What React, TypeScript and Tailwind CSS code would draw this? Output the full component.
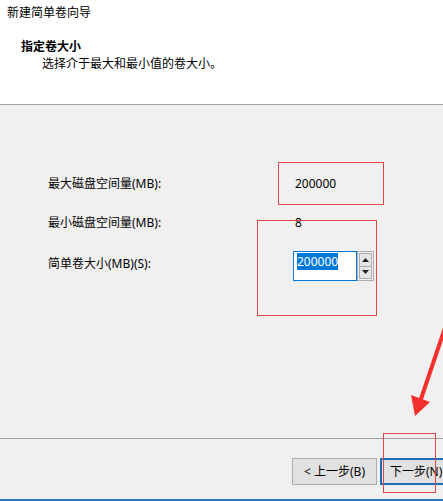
import React from "react";

const font = "font-['Noto_Sans','Noto_Sans_CJK_SC',sans-serif]";

function Spinner() {
  return (
    <div className="flex h-[30px] w-[17px] flex-col border border-[#adadad] bg-[#f0f0f0] p-px">
      <div className="flex flex-1 items-center justify-center border border-[#adadad] bg-[#e5e5e5]">
        <svg width="7" height="4" viewBox="0 0 7 4">
          <polygon points="3.5,0 7,4 0,4" fill="#202020" />
        </svg>
      </div>
      <div className="flex flex-1 items-center justify-center border border-t-0 border-[#adadad] bg-[#e5e5e5]">
        <svg width="7" height="4" viewBox="0 0 7 4">
          <polygon points="0,0 7,0 3.5,4" fill="#202020" />
        </svg>
      </div>
    </div>
  );
}

export default function App() {
  return (
    <div className={`relative h-[501px] w-[443px] overflow-hidden bg-[#f0f0f0] text-[12px] leading-[16px] text-black ${font}`}>
      {/* header */}
      <div className="h-[105px] border-b border-[#a0a0a0] bg-white pl-[7px] pt-[5px]">
        <p>新建简单卷向导</p>
        <p className="ml-[14px] mt-[18px] font-bold">指定卷大小</p>
        <p className="ml-[35px] mt-px">选择介于最大和最小值的卷大小。</p>
      </div>

      {/* body */}
      <div className="h-[333px] pl-[48px] pt-[71px]">
        <div className="flex h-[16px] items-center">
          <span className="w-[247px]">最大磁盘空间量(MB):</span>
          <span>200000</span>
        </div>
        <div className="mt-[23px] flex h-[16px] items-center">
          <span className="w-[247px]">最小磁盘空间量(MB):</span>
          <span>8</span>
        </div>
        <div className="mt-[20px] flex items-start">
          <span className="mt-[5px] w-[245px]">简单卷大小(MB)(S):</span>
          <div className="flex">
            <div className="h-[30px] w-[64px] border border-[#0078d7] bg-white pl-[3px] pt-px">
              <span className="inline-block bg-[#0078d7] leading-[17px] text-white">200000</span>
            </div>
            <Spinner />
          </div>
        </div>
      </div>

      {/* footer */}
      <div className="border-t border-[#a0a0a0]">
        <div className="flex gap-[3px] pl-[292px] pt-[19px]">
          <button className="h-[27px] w-[85px] shrink-0 border border-[#adadad] bg-[#e1e1e1]">
            &lt; 上一步(B)
          </button>
          <button className="h-[27px] w-[85px] shrink-0 border-2 border-[#1e6fb8] bg-[#e1e1e1] pl-[8px] text-left">
            下一步(N)
          </button>
        </div>
      </div>
      <div className="absolute bottom-0 left-0 h-[2px] w-full bg-[#2b79c2]" />

      {/* annotations */}
      <div className="absolute left-[278px] top-[162px] h-[43px] w-[106px] border border-[#e04848]" />
      <div className="absolute left-[257px] top-[220px] h-[96px] w-[120px] border border-[#e04848]" />
      <div className="absolute left-[383px] top-[433px] h-[60px] w-[53px] border border-[#e04848]" />
      <svg className="absolute left-0 top-0" width="443" height="501" viewBox="0 0 443 501">
        <line x1="447" y1="322" x2="420" y2="402" stroke="#f3302c" strokeWidth="4" />
        <polygon points="411,395 430,402 415,416" fill="#f3302c" />
      </svg>
    </div>
  );
}
